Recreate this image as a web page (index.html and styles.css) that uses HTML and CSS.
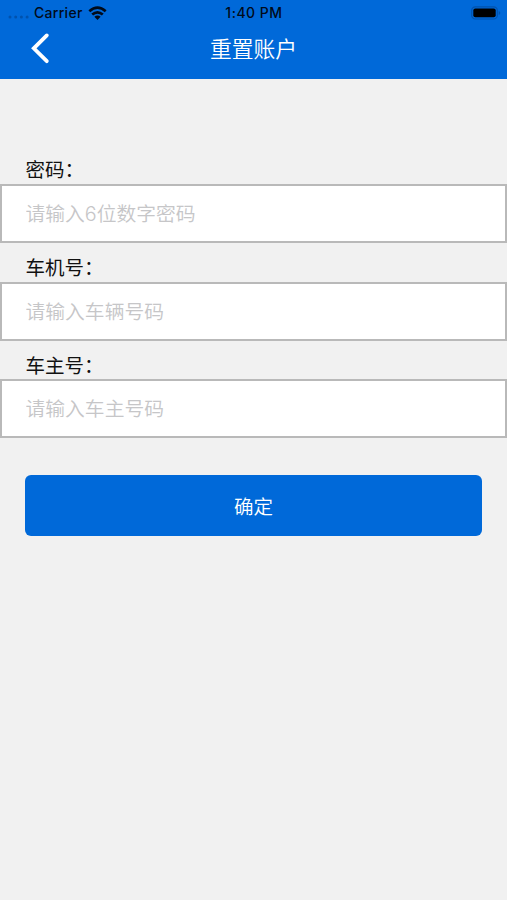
FILE: index.html
```html
<!DOCTYPE html>
<html lang="zh-CN">
<head>
<meta charset="utf-8">
<title>重置账户</title>
<link rel="stylesheet" href="styles.css">
</head>
<body>
<header class="header">
  <div class="status">
    <div class="carrier">
      <svg class="dots" width="22" height="4" viewBox="0 0 22 4"><g fill="#0052ad"><circle cx="2" cy="2" r="1.5"/><circle cx="7.7" cy="2" r="1.5"/><circle cx="13.4" cy="2" r="1.5"/><circle cx="19.1" cy="2" r="1.5"/></g></svg>
      <span class="carrier-name">Carrier</span>
      <svg class="wifi" width="19" height="14" viewBox="0 0 19 14"><g fill="none" stroke="#000b1a" stroke-width="2.7"><path d="M1.3 5.2Q9.5-2 17.7 5.2"/><path d="M4.2 8.6Q9.5 4 14.8 8.6"/></g><path d="M6.4 10.8Q9.5 8.3 12.6 10.8L9.5 14Z" fill="#000b1a"/></svg>
    </div>
    <span class="time">1:40 PM</span>
    <svg class="battery" width="31" height="14" viewBox="0 0 31 14"><rect x=".7" y=".8" width="25.6" height="12.2" rx="3.6" fill="none" stroke="#0053ad" stroke-width="1.2"/><rect x="2.3" y="2.6" width="22.4" height="8.7" rx="2" fill="#000"/><path d="M27.7 5v4q1.6-.5 1.6-2T27.7 5Z" fill="#0053ad"/></svg>
  </div>
  <nav class="nav">
    <svg class="back" width="20" height="32" viewBox="0 0 20 32"><path d="M16.8 3.4 3.8 16.3 16.8 29.2" fill="none" stroke="#fff" stroke-width="3.8" stroke-linecap="round" stroke-linejoin="miter"/></svg>
    <h1 class="title">重置账户</h1>
  </nav>
</header>
<form class="form">
  <label class="field"><span class="label">密码：</span><input class="input" type="text" placeholder="请输入6位数字密码"></label>
  <label class="field"><span class="label">车机号：</span><input class="input" type="text" placeholder="请输入车辆号码"></label>
  <label class="field"><span class="label">车主号：</span><input class="input" type="text" placeholder="请输入车主号码"></label>
  <button class="submit" type="button">确定</button>
</form>
</body>
</html>
```
FILE: styles.css
```css
* {
  box-sizing: border-box;
}

body {
  margin: 0;
  min-height: 900px;
  background: #f1f1f1;
  color: #111;
  font-family: Inter, "Noto Sans CJK SC", sans-serif;
}

svg {
  display: block;
}

.header {
  height: 79px;
  background: #0069d9;
}

.status {
  display: grid;
  grid-template-columns: 1fr auto 1fr;
  align-items: center;
  height: 26px;
  padding: 0 5px 0 8px;
  color: #000b1a;
  font-size: 14px;
  font-weight: 500;
  line-height: 26px;
}

.carrier {
  display: flex;
  align-items: center;
}

.dots {
  margin-top: 8px;
}

.carrier-name {
  margin-left: 4px;
  letter-spacing: 0.3px;
}

.wifi {
  margin-left: 5px;
}

.time {
  margin-left: -2px;
  letter-spacing: 0.5px;
}

.battery {
  justify-self: end;
}

.nav {
  display: grid;
  grid-template-columns: 60px 1fr 60px;
  align-items: center;
  height: 43px;
}

.back {
  margin-left: 30px;
}

.title {
  margin: 0;
  color: #fff;
  font-family: "Noto Sans CJK SC", sans-serif;
  font-size: 21.8px;
  font-weight: 350;
  line-height: 43px;
  text-align: center;
}

.form {
  padding-top: 66px;
}

.field {
  display: block;
}

.label {
  display: block;
  height: 38.75px;
  padding: 9px 25.5px 0;
  font-family: "Noto Sans CJK SC", sans-serif;
  font-size: 19.5px;
  line-height: 30px;
}

.input {
  display: block;
  width: 100%;
  height: 59px;
  padding: 1px 23.5px 0;
  border: 2px solid #b9b9b9;
  border-radius: 0;
  outline: 0;
  background: #fff;
  font-family: Inter, "Noto Sans CJK SC", sans-serif;
  font-size: 19.8px;
}

.input::placeholder {
  color: #c6c6c8;
  font-weight: 350;
  opacity: 1;
}

.submit {
  display: block;
  width: 457px;
  height: 61px;
  margin: 37px 25px 0;
  padding: 0 0 1px;
  border: 0;
  border-radius: 6px;
  background: #0069d9;
  color: #fff;
  font-family: "Noto Sans CJK SC", sans-serif;
  font-size: 19.5px;
  font-weight: 350;
}
```
